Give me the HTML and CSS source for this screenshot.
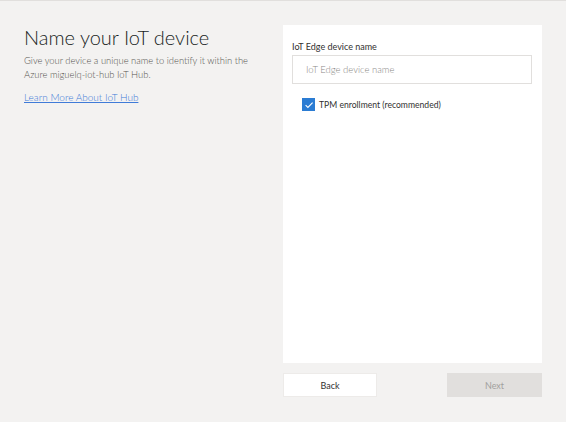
FILE: index.html
```html
<!DOCTYPE html>
<html>
<head>
<meta charset="utf-8">
<link rel="stylesheet" href="styles.css">
</head>
<body>
<div class="page">
  <div class="intro">
    <h1 class="title">Name your IoT device</h1>
    <p class="desc">Give your device a unique name to identify it within the Azure miguelq-iot-hub IoT Hub.</p>
    <a class="link" href="#">Learn More About IoT Hub</a>
  </div>
  <div class="side">
    <div class="panel">
      <label class="label">IoT Edge device name</label>
      <div class="input">IoT Edge device name</div>
      <div class="check-row">
        <span class="checkbox">
          <svg width="12" height="12" viewBox="0 0 12 12"><path d="M2.6 6.2 L4.9 8.4 L9.6 3.6" fill="none" stroke="#fff" stroke-width="1.1"/></svg>
        </span>
        <span class="check-label">TPM enrollment (recommended)</span>
      </div>
    </div>
    <div class="buttons">
      <button class="btn btn-back">Back</button>
      <button class="btn btn-next">Next</button>
    </div>
  </div>
</div>
</body>
</html>
```
FILE: styles.css
```css
html, body {
  margin: 0;
  padding: 0;
  height: 100%;
}
body {
  background: #f3f2f1;
  border-top: 1px solid #e1dfdd;
  box-sizing: border-box;
  font-family: "Lato", "Open Sans", sans-serif;
  color: #201f1e;
}
.page {
  display: flex;
  padding: 24px 24px 0 24px;
  gap: 24px;
}
.intro {
  width: 235px;
}
.title {
  margin: 0;
  font-size: 20px;
  font-weight: 300;
  line-height: 24px;
  color: #201f1e;
}
.desc {
  margin: 5px 0 0 0;
  font-size: 9.4px;
  line-height: 14px;
  color: #55534f;
  font-weight: 300;
}
.link {
  display: inline-block;
  margin-top: 8px;
  font-size: 10px;
  line-height: 14px;
  font-weight: 300;
  color: #3f7bd8;
}
.side {
  width: 259px;
  display: flex;
  flex-direction: column;
  gap: 10px;
}
.panel {
  background: #fff;
  height: 338px;
  padding: 16px 10px 0 9px;
  box-sizing: border-box;
  display: flex;
  flex-direction: column;
}
.label {
  font-size: 9px;
  line-height: 12px;
  color: #323130;
}
.input {
  margin-top: 2px;
  height: 29px;
  border: 1px solid #e1dfdd;
  box-sizing: border-box;
  font-size: 9.5px;
  line-height: 27px;
  padding-left: 13px;
  color: #8a8886;
  font-weight: 300;
}
.check-row {
  display: flex;
  align-items: center;
  gap: 4px;
  margin-top: 14px;
  padding-left: 10px;
  height: 13px;
}
.checkbox {
  width: 13px;
  height: 13px;
  background: #2b7cd3;
  display: flex;
  align-items: center;
  justify-content: center;
}
.check-label {
  font-size: 8.6px;
  line-height: 12px;
  color: #323130;
}
.buttons {
  display: flex;
  justify-content: space-between;
}
.btn {
  width: 94px;
  height: 24px;
  border: 1px solid #edebe9;
  font-family: "Lato", sans-serif;
  font-size: 9px;
  padding: 0;
}
.btn-back {
  background: #fff;
  color: #323130;
}
.btn-next {
  width: 95px;
  background: #e1dfdd;
  border-color: #e1dfdd;
  color: #a19f9d;
}
```
